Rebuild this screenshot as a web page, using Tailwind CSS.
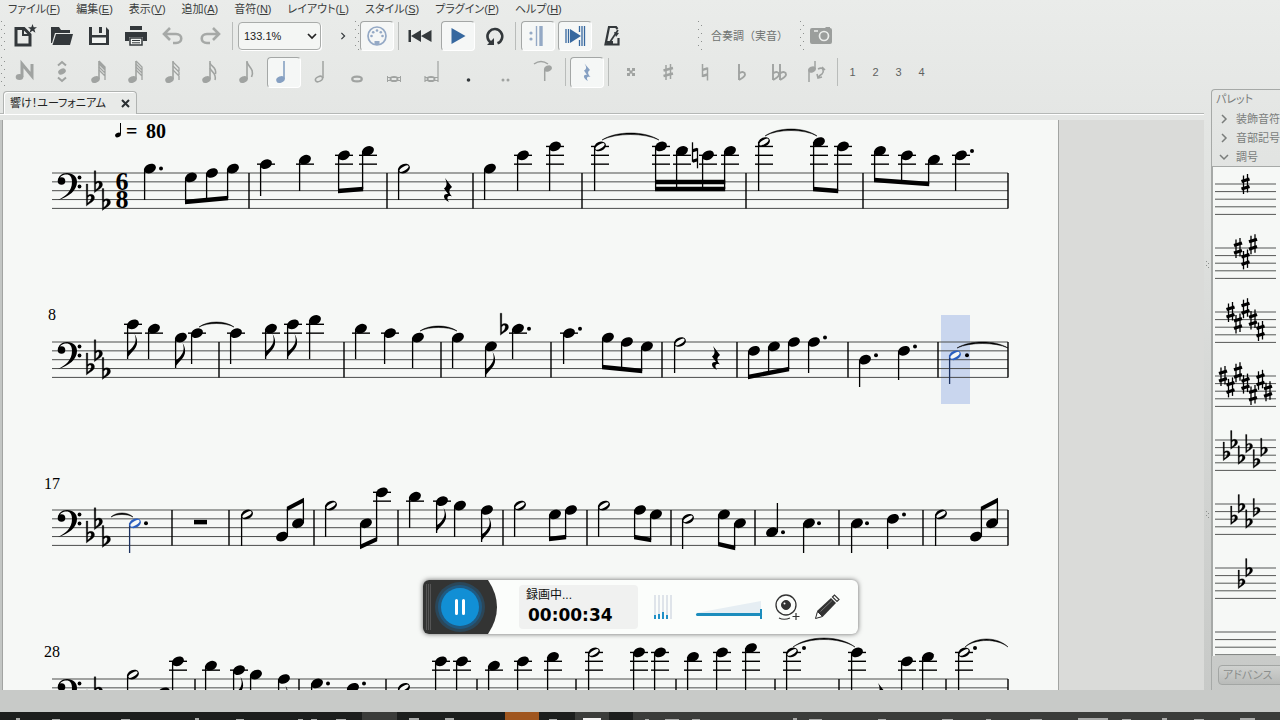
<!DOCTYPE html>
<html lang="ja">
<head>
    <meta charset="UTF-8">
    <meta name="viewport" content="width=device-width, initial-scale=1.0">
    <title>響け！ユーフォニアム</title>
    <script src="https://cdn.jsdelivr.net/npm/@tailwindcss/browser@4"></script>
</head>
<body class="flex h-screen flex-col overflow-hidden bg-linear-to-b from-[#eaecea] to-[#c6c8c6] font-['Liberation_Sans','Noto_Sans_CJK_JP',sans-serif] text-[11px] leading-4 text-[#3a3d3d] [font-feature-settings:'palt']">

    <!-- Shared symbols -->
    <svg class="absolute h-0 w-0" aria-hidden="true">
        <defs>
            <pattern id="dots" width="6" height="8" patternUnits="userSpaceOnUse">
                <rect x="0" y="0" width="1" height="1" fill="#8d908e"/>
                <rect x="3" y="4" width="1" height="1" fill="#8d908e"/>
            </pattern>
            <symbol id="grip" viewBox="0 0 5 30"><rect width="5" height="30" fill="url(#dots)"/></symbol>
            <symbol id="stem-note" viewBox="0 0 26 26">
                <ellipse cx="9.500" cy="20.500" rx="4.400" ry="3.200" transform="rotate(-22 9.500 20.500)" fill="currentColor"/>
                <path d="M13 20V2" stroke="currentColor" stroke-width="1.600"/>
            </symbol>
            <symbol id="flat" viewBox="0 0 26 26">
                <path d="M10 5v16M10 14.500c3-2.500 6-1.500 6 1c0 2.500-3 3.500-6 5.500" fill="none" stroke="currentColor" stroke-width="1.900"/>
            </symbol>
            <symbol id="chev-right" viewBox="0 0 10 10"><path d="M3 1l4 4l-4 4" fill="none" stroke="currentColor" stroke-width="1.500"/></symbol>
        </defs>
    </svg>

    <!-- Menu bar -->
    <nav class="flex h-[17px] shrink-0 items-center gap-4 pl-2 whitespace-nowrap">
        <button>ファイル(<u>F</u>)</button>
        <button>編集(<u>E</u>)</button>
        <button>表示(<u>V</u>)</button>
        <button>追加(<u>A</u>)</button>
        <button>音符(<u>N</u>)</button>
        <button>レイアウト(<u>L</u>)</button>
        <button>スタイル(<u>S</u>)</button>
        <button>プラグイン(<u>P</u>)</button>
        <button>ヘルプ(<u>H</u>)</button>
    </nav>

    <!-- File / playback toolbar -->
    <div class="flex h-[38px] shrink-0 items-center pl-px text-[#33383b]">
        <svg class="h-[30px] w-[5px] shrink-0"><use href="#grip"/></svg>
        <button class="flex w-[37px] justify-center" aria-label="新規作成">
            <svg class="size-[26px]" viewBox="0 0 26 26"><path d="M4 5.500h8l6 6V22H4z" fill="none" stroke="currentColor" stroke-width="3"/><path d="M11 5v7h7" fill="none" stroke="currentColor" stroke-width="2"/><path d="M20.500 1l1.200 3.300h3.300l-2.600 2l1 3.400l-2.900-2l-2.900 2l1-3.400l-2.600-2h3.300z" fill="currentColor"/></svg>
        </button>
        <button class="flex w-[37px] justify-center" aria-label="開く">
            <svg class="size-[26px]" viewBox="0 0 26 26"><path d="M2 4h8l2 3h9v3H6L3 20H2z" fill="currentColor"/><path d="M7 11h17l-3 11H3.500z" fill="currentColor"/></svg>
        </button>
        <button class="flex w-[37px] justify-center" aria-label="保存">
            <svg class="size-[26px]" viewBox="0 0 26 26"><path d="M3 4h3v8h14V4l3 3v15H3z" fill="currentColor"/><path d="M7 4h9v6H7z" fill="#e6e8e6"/><path d="M13 4h3v6h-3z" fill="currentColor"/><path d="M6 14.500h14V20H6z" fill="#f2f4f2"/></svg>
        </button>
        <button class="flex w-[37px] justify-center" aria-label="印刷">
            <svg class="size-[26px]" viewBox="0 0 26 26"><path d="M7 3h12v4H7zM2 9h22v9h-4v-4H6v4H2z" fill="currentColor"/><path d="M7 15h12v7H7z" fill="#f2f4f2" stroke="currentColor" stroke-width="1.500"/><path d="M9 17.500h8M9 19.800h8" stroke="currentColor"/></svg>
        </button>
        <button class="flex w-[37px] justify-center text-[#a6a9a7]" aria-label="元に戻す">
            <svg class="size-[26px]" viewBox="0 0 26 26"><path d="M10 5l-6 6l6 6M5 11h11c7 0 7 9 0 9h-3" fill="none" stroke="currentColor" stroke-width="2.600"/></svg>
        </button>
        <button class="flex w-[37px] justify-center text-[#a6a9a7]" aria-label="やり直し">
            <svg class="size-[26px]" viewBox="0 0 26 26"><path d="M16 5l6 6l-6 6M21 11H10c-7 0-7 9 0 9h3" fill="none" stroke="currentColor" stroke-width="2.600"/></svg>
        </button>
        <span class="mr-[5px] ml-[4px] h-7 w-px bg-[#b9bcba]"></span>
        <label class="relative flex h-7 w-[83px] items-center">
            <select class="h-full w-full appearance-none rounded-sm border border-[#a9acaa] bg-[#f4f6f4] pl-[5px] text-[11px] text-[#222] shadow-[1px_1px_0_#fff]" aria-label="ズーム">
                <option>133.1%</option>
                <option>100%</option>
                <option>75%</option>
            </select>
            <svg class="pointer-events-none absolute right-1 size-[10px]" viewBox="0 0 10 10"><path d="M1 3l4 4l4-4" fill="none" stroke="#222" stroke-width="1.700"/></svg>
        </label>
        <button class="flex w-[34px] justify-end pr-[8px]" aria-label="その他"><svg class="size-[8px]"><use href="#chev-right"/></svg></button>
        <svg class="h-[30px] w-[5px] shrink-0"><use href="#grip"/></svg>
        <button class="flex h-[30px] w-[34px] items-center justify-center rounded-sm border border-[#a4a7a6] border-r-white border-b-white bg-[#f5f7f6] text-[#94a9c5]" aria-label="MIDI入力">
            <svg class="size-[22px]" viewBox="0 0 22 22"><circle cx="11" cy="11" r="9" fill="none" stroke="currentColor" stroke-width="1.700"/><path d="M8.500 16h5v4h-5z" fill="currentColor"/><g fill="currentColor"><circle cx="5.500" cy="11" r="1.300"/><circle cx="7.200" cy="7.200" r="1.300"/><circle cx="11" cy="5.500" r="1.300"/><circle cx="14.800" cy="7.200" r="1.300"/><circle cx="16.500" cy="11" r="1.300"/></g></svg>
        </button>
        <span class="ml-[4px] h-7 w-px bg-[#b9bcba]"></span>
        <button class="flex w-[42px] justify-center" aria-label="先頭へ">
            <svg class="size-6" viewBox="0 0 24 24"><path d="M.500 6h2.500v12H.500zM13 6v12L3 12zM23.500 6v12l-10.500-6z" fill="currentColor"/></svg>
        </button>
        <button class="flex h-[30px] w-[34px] items-center justify-center rounded-sm border border-[#a4a7a6] border-r-white border-b-white bg-[#f5f7f6] text-[#36689f]" aria-label="再生">
            <svg class="size-[18px]" viewBox="0 0 18 18"><path d="M2.500 1l14 8l-14 8z" fill="currentColor"/></svg>
        </button>
        <button class="flex w-[40px] justify-center" aria-label="ループ">
            <svg class="size-5" viewBox="0 0 20 20"><path d="M6.500 17a7.400 7.400 0 1 1 6 .3" fill="none" stroke="currentColor" stroke-width="2.600"/><path d="M2 19h7v-7z" fill="currentColor"/></svg>
        </button>
        <span class="mr-[5px] h-7 w-px bg-[#b9bcba]"></span>
        <button class="flex h-[30px] w-[34px] items-center justify-center rounded-sm border border-[#a4a7a6] border-r-white border-b-white bg-[#f5f7f6] text-[#94a9c5]" aria-label="リピート">
            <svg class="size-5" viewBox="0 0 20 20"><circle cx="3" cy="7" r="1.600" fill="currentColor"/><circle cx="3" cy="13" r="1.600" fill="currentColor"/><path d="M8.500 0v20" stroke="currentColor" stroke-width="1.400"/><path d="M13 0v20" stroke="currentColor" stroke-width="3.400"/></svg>
        </button>
        <button class="ml-[3px] flex h-[30px] w-[34px] items-center justify-center rounded-sm border border-[#a4a7a6] border-r-white border-b-white bg-[#f5f7f6] text-[#36689f]" aria-label="プレイパン">
            <svg class="size-[22px]" viewBox="0 0 22 22"><path d="M2 4v14M4.500 4v14M15.500 1v6M18 1v20M15.500 15v6M20.500 1v20" stroke="currentColor" stroke-width="1.300"/><path d="M6 4l11 7l-11 7z" fill="currentColor"/></svg>
        </button>
        <button class="flex w-[40px] justify-center" aria-label="メトロノーム">
            <svg class="size-6" viewBox="0 0 24 24"><path d="M17.500 5L16 3H9L5.500 20.500h13V14" fill="none" stroke="currentColor" stroke-width="2.200"/><path d="M10 18L18 6" stroke="currentColor" stroke-width="1.700"/><path d="M14 8l5 1l-3 4z" fill="currentColor"/><path d="M7 17h6v3H7z" fill="currentColor"/></svg>
        </button>
        <svg class="ml-[66px] h-[30px] w-[5px] shrink-0"><use href="#grip"/></svg>
        <button class="w-[97px] pl-[8px] text-left whitespace-nowrap text-[#6f7270] [font-feature-settings:normal]">合奏調（実音）</button>
        <svg class="h-[30px] w-[5px] shrink-0"><use href="#grip"/></svg>
        <button class="flex w-[32px] justify-center text-[#9b9e9c]" aria-label="画像キャプチャ">
            <svg class="size-6" viewBox="0 0 24 24"><path d="M1 6q0-2 2-2h13l1-1h4v1q2 0 2 2v12q0 2-2 2H3q-2 0-2-2z" fill="currentColor"/><circle cx="15" cy="12" r="4.500" fill="none" stroke="#eceeec" stroke-width="1.700"/><path d="M5 7h4" stroke="#eceeec" stroke-width="1.500"/></svg>
        </button>
    </div>

    <!-- Note input toolbar -->
    <div class="flex h-[34px] shrink-0 items-center pl-px text-[#a0a3a1]">
        <svg class="h-[30px] w-[5px] shrink-0"><use href="#grip"/></svg>
        <button class="flex w-[37px] justify-center" aria-label="音符入力"><svg class="size-[26px]" viewBox="0 0 26 26"><ellipse cx="7.500" cy="18" rx="3.800" ry="3" fill="currentColor"/><path d="M10 18V5l10 12V5" fill="none" stroke="currentColor" stroke-width="3"/></svg></button>
        <button class="flex w-[37px] justify-center" aria-label="再ピッチ"><svg class="size-[26px]" viewBox="0 0 26 26"><ellipse cx="13" cy="12.500" rx="4" ry="2.800" transform="rotate(-25 13 12.500)" fill="currentColor"/><path d="M9 6.500l4-3.500l4 3.500M9 18.500l4 3.500l4-3.500" fill="none" stroke="currentColor" stroke-width="2"/></svg></button>
        <button class="flex w-[37px] justify-center" aria-label="64分音符"><svg class="size-[26px]" viewBox="0 0 26 26"><use href="#stem-note"/><path d="M13 2l6 6v3M13 5l6 6v3M13 8l6 6v3M13 11l6 6v4M13 3.500l6 6" fill="none" stroke="currentColor" stroke-width="1.300"/></svg></button>
        <button class="flex w-[37px] justify-center" aria-label="32分音符"><svg class="size-[26px]" viewBox="0 0 26 26"><use href="#stem-note"/><path d="M13 2l6 6v3M13 5l6 6v3M13 8l6 6v3M13 11l6 6v4" fill="none" stroke="currentColor" stroke-width="1.300"/></svg></button>
        <button class="flex w-[37px] justify-center" aria-label="16分音符(3連桁)"><svg class="size-[26px]" viewBox="0 0 26 26"><use href="#stem-note"/><path d="M13 3l6 6v3M13 7l6 6v3M13 11l6 6v4" fill="none" stroke="currentColor" stroke-width="1.300"/></svg></button>
        <button class="flex w-[37px] justify-center" aria-label="16分音符"><svg class="size-[26px]" viewBox="0 0 26 26"><use href="#stem-note"/><path d="M13 4c1 4 7 4 5.500 11M13 9c1 4 7 5 5 12" fill="none" stroke="currentColor" stroke-width="1.500"/></svg></button>
        <button class="flex w-[37px] justify-center" aria-label="8分音符"><svg class="size-[26px]" viewBox="0 0 26 26"><use href="#stem-note"/><path d="M13 3c1 5 8 7 4.500 15" fill="none" stroke="currentColor" stroke-width="1.600"/></svg></button>
        <button class="ml-[2px] flex h-[31px] w-[34px] items-center justify-center rounded-sm border border-[#a4a7a6] border-r-white border-b-white bg-[#f5f7f6] text-[#86a0c2]" aria-label="4分音符" aria-pressed="true"><svg class="size-[26px]" viewBox="0 0 26 26"><use href="#stem-note"/></svg></button>
        <button class="flex w-[37px] justify-center" aria-label="2分音符"><svg class="size-[26px]" viewBox="0 0 26 26"><ellipse cx="12" cy="20" rx="3.800" ry="2.400" transform="rotate(-25 12 20)" fill="none" stroke="currentColor" stroke-width="1.500"/><path d="M16 19V2" stroke="currentColor" stroke-width="1.500"/></svg></button>
        <button class="flex w-[37px] justify-center" aria-label="全音符"><svg class="size-[26px]" viewBox="0 0 26 26"><ellipse cx="13" cy="20" rx="4.800" ry="2.400" fill="none" stroke="currentColor" stroke-width="2.200"/></svg></button>
        <button class="flex w-[37px] justify-center" aria-label="倍全音符"><svg class="size-[26px]" viewBox="0 0 26 26"><ellipse cx="13" cy="20" rx="3.600" ry="2.200" fill="none" stroke="currentColor" stroke-width="1.800"/><path d="M6.500 17v6M19.500 17v6M6.500 18.500h13M6.500 21.500h13" stroke="currentColor"/></svg></button>
        <button class="flex w-[37px] justify-center" aria-label="ロンガ"><svg class="size-[26px]" viewBox="0 0 26 26"><ellipse cx="13" cy="20" rx="3.600" ry="2.200" fill="none" stroke="currentColor" stroke-width="1.800"/><path d="M7 17v6M7 18.500h13M7 21.500h13M20 2v21" stroke="currentColor" stroke-width="1.200"/></svg></button>
        <button class="flex w-[37px] justify-center" aria-label="付点"><svg class="size-[26px]" viewBox="0 0 26 26"><circle cx="13.500" cy="21" r="1.800" fill="#33383b"/></svg></button>
        <button class="flex w-[37px] justify-center" aria-label="複付点"><svg class="size-[26px]" viewBox="0 0 26 26"><circle cx="11" cy="21" r="1.500" fill="currentColor"/><circle cx="16" cy="21" r="1.500" fill="currentColor"/></svg></button>
        <button class="flex w-[37px] justify-center" aria-label="タイ"><svg class="size-[26px]" viewBox="0 0 26 26"><path d="M5 5q7-5 14 0" fill="none" stroke="currentColor" stroke-width="1.500"/><ellipse cx="19" cy="9.500" rx="4" ry="3" transform="rotate(-25 19 9.500)" fill="currentColor"/><path d="M15.700 10v12" stroke="currentColor" stroke-width="1.500"/></svg></button>
        <span class="mr-[4px] ml-[5px] h-7 w-px bg-[#b9bcba]"></span>
        <button class="flex h-[31px] w-[34px] items-center justify-center rounded-sm border border-[#a4a7a6] border-r-white border-b-white bg-[#f5f7f6] text-[#86a0c2]" aria-label="休符"><svg class="size-[18px]" viewBox="-9 -9 18 18"><path d="M-2.500-8.500L3-2C0 0 1 2 3.500 5C0 4 -1 6 1 9C-5 6 -3.500 2 0 3L-3-1.500C0-3 -.500-5 -2.500-8.500Z" fill="currentColor"/></svg></button>
        <span class="mr-[3px] ml-[4px] h-7 w-px bg-[#b9bcba]"></span>
        <button class="flex w-[37px] justify-center" aria-label="ダブルシャープ"><svg class="size-[26px]" viewBox="0 0 26 26"><path d="M10 10l6 6M16 10l-6 6" stroke="currentColor" stroke-width="1.700"/><path d="M9 9h3v3H9zM14 9h3v3h-3zM9 14h3v3H9zM14 14h3v3h-3z" fill="currentColor"/></svg></button>
        <button class="flex w-[37px] justify-center" aria-label="シャープ"><svg class="size-[26px]" viewBox="0 0 26 26"><path d="M11 6v15M15.500 5v15" stroke="currentColor" stroke-width="1.500"/><path d="M8.500 11.500l9.500-2.500M8.500 17l9.500-2.500" stroke="currentColor" stroke-width="2.400"/></svg></button>
        <button class="flex w-[37px] justify-center" aria-label="ナチュラル"><svg class="size-[26px]" viewBox="0 0 26 26"><path d="M10.500 5v13M15.500 8.500v13" stroke="currentColor" stroke-width="1.500"/><path d="M10.500 10.800l5-1.500M10.500 17l5-1.500" stroke="currentColor" stroke-width="2.400"/></svg></button>
        <button class="flex w-[37px] justify-center" aria-label="フラット"><svg class="size-[26px]" viewBox="0 0 26 26"><use href="#flat"/></svg></button>
        <button class="flex w-[37px] justify-center" aria-label="ダブルフラット"><svg class="size-[26px]" viewBox="0 0 26 26"><use href="#flat" x="-3"/><use href="#flat" x="4"/></svg></button>
        <button class="flex w-[37px] justify-center" aria-label="符尾反転"><svg class="size-[26px]" viewBox="0 0 26 26"><ellipse cx="9" cy="10.500" rx="4" ry="3" transform="rotate(-25 9 10.500)" fill="currentColor"/><path d="M12 10V2M6 11v12" stroke="currentColor" stroke-width="1.500"/><path d="M15 10c6-3 6 3 4 5c-2 1-3 2-4 4M19 8l3 3M14 15l1 4l4-1" fill="none" stroke="currentColor" stroke-width="1.600"/></svg></button>
        <span class="mr-[3px] ml-[3px] h-7 w-px bg-[#b9bcba]"></span>
        <div class="flex text-[#5f6260]">
            <button class="w-[23px]">1</button>
            <button class="w-[23px]">2</button>
            <button class="w-[23px]">3</button>
            <button class="w-[23px]">4</button>
        </div>
    </div>

    <!-- Main area -->
    <main class="flex min-h-0 flex-1">
        <section class="flex min-w-0 flex-1 flex-col">
            <div class="flex h-[25px] shrink-0 items-end">
                <span class="h-full w-[3px] border-b border-[#b5b8b6]"></span>
                <div class="flex h-[23px] w-[134px] items-center justify-between rounded-t-sm border border-b-0 border-[#b0b3b1] bg-[#e8eae8] pr-[6px] pl-[6px] text-[#222] shadow-[inset_1px_1px_0_#fff]">
                    <span class="whitespace-nowrap">響け！ユーフォニアム</span>
                    <button aria-label="閉じる"><svg class="size-[9px]" viewBox="0 0 9 9"><path d="M1 1l7 7M8 1l-7 7" stroke="#2b3033" stroke-width="2"/></svg></button>
                </div>
                <span class="h-full flex-1 border-b border-[#b5b8b6]"></span>
            </div>
            <div class="h-[6px] shrink-0 border-t border-white"></div>
            <div class="flex min-h-0 flex-1 overflow-hidden border-l-2 border-[#c3c6c4] bg-[#dadbd9]">
                <div class="w-[1057px] shrink-0 border-x border-[#a2a4a2] bg-[#f6f8f6]">
                    <svg id="score" class="block h-[570px] w-[1055px]" viewBox="3 120 1055 570" role="img" aria-label="楽譜"></svg>
                </div>
            </div>
        </section>

        <div class="flex w-[7px] shrink-0 flex-col items-center pt-[172px]">
            <svg class="h-[260px] w-[3px]" viewBox="0 0 3 260" fill="#8d908e"><path d="M0 0h1v1H0zM2 2h1v1H2zM0 4h1v1H0zM2 6h1v1H2zM0 250h1v1H0zM2 252h1v1H2zM0 254h1v1H0zM2 256h1v1H2z"/></svg>
        </div>

        <!-- Palette -->
        <aside class="flex w-[69px] shrink-0 flex-col overflow-hidden rounded-tl border-t border-l border-[#a6a9a7] text-[#7a7d7b]">
            <h2 class="h-[19px] shrink-0 pl-[4px] leading-[19px]">パレット</h2>
            <button class="flex h-[19px] shrink-0 items-center gap-[7px] pl-[7px] whitespace-nowrap"><svg class="size-[10px] shrink-0"><use href="#chev-right"/></svg>装飾音符</button>
            <button class="flex h-[19px] shrink-0 items-center gap-[7px] pl-[7px] whitespace-nowrap"><svg class="size-[10px] shrink-0"><use href="#chev-right"/></svg>音部記号</button>
            <button class="flex h-[19px] shrink-0 items-center gap-[7px] pl-[7px] whitespace-nowrap"><svg class="size-[10px] shrink-0" viewBox="0 0 10 10"><path d="M1 3l4 4l4-4" fill="none" stroke="currentColor" stroke-width="1.500"/></svg>調号</button>
            <div class="min-h-0 flex-1 overflow-hidden border-t border-l border-[#a6a9a7] bg-[#f6f8f6]">
                <svg id="palette" class="block h-[512px] w-[67px]" viewBox="1213 167 67 512" role="img" aria-label="調号パレット"></svg>
            </div>
            <div class="h-[34px] shrink-0 pt-[9px] pl-[6px]">
                <button class="h-5 w-20 rounded-sm border border-[#a3a6a4] bg-linear-to-b from-[#cfd1cf] to-[#b9bbb9] pl-[4px] text-left whitespace-nowrap text-[#8b8e8c]">アドバンス</button>
            </div>
        </aside>
    </main>

    <div class="h-[22px] shrink-0 bg-[#c8cac8]"></div>

    <!-- Taskbar -->
    <footer class="flex h-2 shrink-0 bg-[#3b3c3a]">
        <svg class="h-2 w-full" viewBox="0 0 1280 8" preserveAspectRatio="xMinYMin slice">
            <path d="M0 0h362v8H0zM397 0h108v8H397zM539 0h36v8h-36zM609 0h24v8h-24z" fill="#1c1e1d"/>
            <path d="M505 0h34v8h-34z" fill="#a0561f"/>
            <path d="M583 6h18v2h-18z" fill="#f2f2f2"/>
            <g fill="#a9aaa9">
                <path d="M16 6h4v2h-4zM52 7h8v1h-8zM121 7h9v1h-9zM195 6h4v2h-4zM236 7h8v1h-8zM298 7h5v1h-5zM311 7h6v1h-6zM336 7h10v1h-10zM409 6h10v2h-10zM445 6h9v2h-9zM549 7h8v1h-8zM645 7h4v1h-4zM665 7h14v1h-14zM692 7h8v1h-8zM793 6h4v2h-4zM809 7h13v1h-13zM878 7h8v1h-8zM942 7h11v1h-11zM986 7h5v1h-5zM1030 7h12v1h-12zM1078 6h30v2h-30zM1122 7h9v1h-9zM1162 6h5v2h-5zM1194 7h10v1h-10zM1240 6h15v2h-15z"/>
            </g>
        </svg>
    </footer>

    <!-- Recorder window floating over the score -->
    <div class="absolute top-[580px] left-[423px] flex h-[54px] w-[435px] items-center overflow-hidden rounded-md bg-[#fbfdfb] text-[#111] shadow-[0_0_5px_#666]">
        <button class="h-full w-[74px] shrink-0" aria-label="一時停止">
            <svg class="h-[54px] w-[74px]" viewBox="0 0 74 54">
                <path d="M0 0h65q18 27 0 54H0z" fill="#333433"/>
                <path d="M3.500 4v46M5.500 4v46M7.500 4v46" stroke="#555" stroke-width="1"/>
                <circle cx="37" cy="27" r="25" fill="#2b4759"/>
                <circle cx="37" cy="27" r="22" fill="#1f5a82"/>
                <circle cx="37" cy="27" r="19" fill="#118fd5"/>
                <path d="M33.500 20.500v13M40.500 20.500v13" stroke="#fff" stroke-width="3" stroke-linecap="round"/>
            </svg>
        </button>
        <div class="ml-[22px] h-[44px] w-[119px] shrink-0 rounded-sm bg-[#f0f1f0] pl-[7px]">
            <div class="pt-px text-[12px] leading-[18px] [font-feature-settings:normal]">録画中...</div>
            <div class="pl-[2px] font-['DejaVu_Sans',sans-serif] text-[17px] leading-[22px] font-bold text-black">00:00:34</div>
        </div>
        <svg class="ml-[16px] h-[26px] w-[19px] shrink-0" viewBox="0 0 19 26">
            <path d="M1 1v24M5 1v24M9 1v24M13 1v24M17 1v24" stroke="#dfe4ea" stroke-width="2"/>
            <path d="M1 21v4M5 20v5M9 18v7M13 21v4" stroke="#2090c6" stroke-width="2"/>
        </svg>
        <div class="relative ml-[23px] h-[26px] w-[66px] shrink-0">
            <svg class="absolute inset-0 h-[26px] w-[66px]" viewBox="0 0 66 26"><path d="M0 19L65 7v12z" fill="#e6eef3"/></svg>
            <input type="range" min="0" max="100" value="100" aria-label="音量" class="absolute top-[15px] left-0 h-[10px] w-[66px] appearance-none bg-transparent [&::-webkit-slider-runnable-track]:h-[3px] [&::-webkit-slider-runnable-track]:rounded-sm [&::-webkit-slider-runnable-track]:bg-[#1c8dbd] [&::-webkit-slider-thumb]:-mt-[4px] [&::-webkit-slider-thumb]:h-[10px] [&::-webkit-slider-thumb]:w-[2px] [&::-webkit-slider-thumb]:appearance-none [&::-webkit-slider-thumb]:bg-[#1c8dbd]">
        </div>
        <button class="ml-[12px] shrink-0" aria-label="ウェブカメラ">
            <svg class="h-[28px] w-[26px]" viewBox="0 0 26 28" fill="none" stroke="#333"><circle cx="12" cy="12" r="10" stroke-width="1.300"/><circle cx="12" cy="12" r="4.500" fill="#333"/><circle cx="10.500" cy="10.500" r="1" fill="#fff" stroke="none"/><path d="M5 25q5 2.500 11 0M18.500 23.500h7M22 20v7" stroke-width="1.200"/></svg>
        </button>
        <button class="ml-[14px] shrink-0" aria-label="描画">
            <svg class="size-[26px]" viewBox="0 0 26 26"><path d="M1.500 24.500l2-8L17 4l5 5L9 22.500z" fill="#333"/><path d="M1.500 24.500l2-7l5 5z" fill="#fbfdfb" stroke="#333"/><path d="M18.500 3l2-2l4.500 4.500l-2 2z" fill="#fbfdfb" stroke="#333" stroke-width="1.200"/><path d="M6.500 17.500L18 6.500" stroke="#888" stroke-width=".8"/></svg>
        </button>
    </div>

    <script>
        const SPACE = 8.85;          // distance between two staff lines
        const STEP = SPACE / 2;      // one scale step
        const INK = '#000';
        const SELECTED = '#2a5fc0';

        // q = quarter, h = half, e = eighth: [type, x, step above top line, stem end, options]
        // b = beamed group: ['b', [[x, step], ...], beam y left, beam y right, options]
        // bar, rest, tie: positions only
        const staves = [
            { top: 173, number: null, time: true, items: [
                ['q', 150, 1, 200, { dot: 161 }], ['b', [[191, -1], [212, 0], [233, 1]], 202, 198], ['bar', 249],
                ['q', 266, 2, 196], ['q', 305, 3, 191], ['b', [[344, 4], [368, 5]], 191, 189], ['bar', 387],
                ['h', 404, 1, 200], ['rest', 448, 190], ['bar', 473],
                ['q', 490, 1, 200], ['q', 523, 4, 191], ['q', 555, 6, 191], ['bar', 582],
                ['h', 600, 6, 191], ['tie', 602, 659, 140, 133],
                ['b', [[661, 6], [682, 5], [708, 4], [730, 5]], 189, 189, { double: true }], ['natural', 695, 4], ['bar', 746],
                ['h', 764, 7, 191], ['tie', 765, 817, 136, 129], ['b', [[819, 7], [843, 6]], 189, 191], ['bar', 863],
                ['b', [[880, 5], [907, 4], [934, 3]], 180, 184], ['q', 961, 4, 191, { dot: 972 }], ['bar', 1008]
            ]},
            { top: 342, number: ['8', 48, 320], items: [
                ['e', 133, 4, 359], ['q', 154, 3, 359], ['e', 181, 1, 368], ['q', 197, 2, 364], ['tie', 199, 234, 327, 322], ['bar', 219],
                ['q', 236, 2, 364], ['e', 271, 3, 359], ['e', 293, 4, 359], ['q', 315, 5, 359], ['bar', 344],
                ['q', 361, 3, 359], ['q', 390, 2, 364], ['q', 418, 1, 368], ['tie', 420, 457, 331, 326], ['bar', 441],
                ['q', 458, 1, 368], ['e', 491, -1, 377], ['flat', 501, 3], ['q', 518, 3, 359, { dot: 529 }], ['bar', 551],
                ['q', 569, 2, 364, { dot: 580 }], ['b', [[608, 1], [627, 0], [647, -1]], 367, 371], ['bar', 662],
                ['h', 680, 0, 373], ['rest', 716, 358], ['bar', 737],
                ['b', [[754, -2], [774, -1], [794, 0]], 377, 369], ['q', 814, 0, 373, { dot: 825 }], ['bar', 848],
                ['q', 865, -4, 387, { dot: 876 }], ['q', 904, -2, 380, { dot: 915 }], ['bar', 938],
                ['h', 955, -3, 384, { dot: 967, selected: true }], ['tie', 957, 1008, 348, 342], ['bar', 1008]
            ]},
            { top: 510, number: ['17', 44, 489], items: [
                ['tie', 111, 133, 517, 513], ['h', 135, -3, 553, { dot: 146, selected: true }], ['bar', 172],
                ['whole-rest', 194], ['bar', 229],
                ['h', 247, -1, 546], ['b', [[282, -6], [298, -3]], 509, 500, { up: true }], ['bar', 314],
                ['h', 331, 1, 537], ['b', [[366, -3], [382, 4]], 547, 539], ['bar', 398],
                ['q', 415, 3, 528], ['e', 442, 2, 533], ['q', 460, 1, 537], ['e', 487, 0, 542], ['bar', 503],
                ['h', 520, 1, 537], ['b', [[555, -1], [571, 0]], 539, 537], ['bar', 587],
                ['h', 604, 1, 537], ['b', [[640, 0], [656, -1]], 537, 540], ['bar', 671],
                ['h', 688, -2, 549], ['b', [[724, -1], [740, -3]], 544, 548], ['bar', 755],
                ['q', 772, -5, 503, { dot: 783, up: true }], ['q', 809, -3, 553, { dot: 819 }], ['bar', 839],
                ['q', 857, -3, 553, { dot: 867 }], ['q', 893, -2, 549, { dot: 904 }], ['bar', 923],
                ['h', 941, -1, 546], ['b', [[976, -6], [992, -3]], 509, 500, { up: true }], ['bar', 1008]
            ]},
            { top: 679, number: ['28', 44, 657], items: [
                ['h', 133, 1, 706], ['b', [[164, -3], [178, 4]], 716, 708], ['bar', 195],
                ['q', 211, 3, 697], ['e', 239, 2, 702], ['q', 256, 1, 706], ['e', 284, 0, 711], ['bar', 299],
                ['q', 317, -1, 715, { dot: 328 }], ['q', 353, -2, 718, { dot: 364 }], ['bar', 386],
                ['h', 404, -2, 718], ['q', 441, 4, 697], ['q', 462, 4, 697], ['bar', 477],
                ['q', 494, 3, 697], ['q', 523, 4, 697], ['q', 553, 5, 697], ['bar', 576],
                ['h', 594, 6, 697], ['q', 639, 6, 697], ['q', 660, 6, 697], ['bar', 676],
                ['q', 693, 5, 697], ['q', 722, 6, 697], ['q', 751, 7, 697], ['bar', 775],
                ['h', 792, 6, 697, { dot: 804 }], ['tie', 793, 855, 647, 638], ['bar', 839],
                ['q', 857, 6, 697], ['rest', 881, 695], ['q', 907, 4, 697], ['q', 928, 5, 697], ['bar', 946],
                ['h', 964, 6, 697, { dot: 975 }], ['tie', 965, 1008, 647, 639], ['bar', 1008]
            ]}
        ];

        const line = (x1, y1, x2, y2, w = 1.3, c = INK) =>
            `<path d="M${x1} ${y1}L${x2} ${y2}" stroke="${c}" stroke-width="${w}" fill="none"/>`;

        function flat(x, y, s = 1) {
            return `<g transform="translate(${x} ${y}) scale(${s})"><path d="M-.8-15.500H.8L.7 3.500C3 2 4.300 0 4.300-2C4.300-4.200 2-4 .7-2V-4C3-6.200 7.500-5.500 7.500-1.800C7.500 2 2.500 3.500-.6 6.500Z" stroke="#000" stroke-width=".3"/></g>`;
        }

        function sharp(x, y) {
            return `<g transform="translate(${x} ${y})">` +
                line(-2, -8.5, -2, 10, 1.3) + line(2, -10, 2, 8.5, 1.3) +
                line(-4, -2.4, 4, -5, 3.2) + line(-4, 5, 4, 2.4, 3.2) + '</g>';
        }

        function head(x, y, half, color) {
            const body = `<ellipse cx="${x}" cy="${y}" rx="6.2" ry="4.5" transform="rotate(-25 ${x} ${y})" fill="${color}"/>`;
            if (!half) return body;
            return body + `<ellipse cx="${x}" cy="${y}" rx="5.2" ry="2" transform="rotate(-32 ${x} ${y})" fill="#f6f8f6"/>`;
        }

        function ledgers(x, step, top) {
            let out = '';
            for (let k = 2; k <= step; k += 2) out += line(x - 9, top - k * STEP, x + 9, top - k * STEP, 1.4);
            return out;
        }

        function drawItem(item, top) {
            const [type, a, b, c, d] = item;
            const y = top - b * STEP;
            if (type === 'bar') return line(a, top, a, top + 4 * SPACE, 1.4);
            if (type === 'rest') {
                return `<path transform="translate(${a} ${b})" d="M-3-12L4-3C0 0 1 3 4 6.500C-.5 5-2 7.500 1 12C-6 8.500-5 3 0 4L-4-1.500C-.5-4-1-7.500-3-12Z"/>`;
            }
            if (type === 'whole-rest') return `<rect x="${a}" y="${top + SPACE + 1}" width="13" height="4.500"/>`;
            if (type === 'tie') {
                const peak = 4 / 3 * (c - d);
                const w = (b - a) / 4;
                return `<path d="M${a} ${c}C${a + w} ${c - peak} ${b - w} ${c - peak} ${b} ${c}C${b - w} ${c - peak + 2} ${a + w} ${c - peak + 2} ${a} ${c}Z" stroke="#000" stroke-width=".5"/>`;
            }
            if (type === 'flat') return flat(a, y);
            if (type === 'natural') {
                return line(a - 2.5, y - 13, a - 2.5, y + 6.5) + line(a + 2.5, y - 7, a + 2.5, y + 13) +
                    line(a - 2.5, y - 4.5, a + 2.5, y - 6, 3) + line(a - 2.5, y + 6, a + 2.5, y + 4.5, 3);
            }
            if (type === 'b') {
                const opts = d || {};
                const dx = opts.up ? 5.4 : -5.4;
                const x1 = a[0][0] + dx;
                const x2 = a[a.length - 1][0] + dx;
                let out = '';
                for (const [x, step] of a) {
                    const end = b + (c - b) * (x + dx - x1) / (x2 - x1);
                    out += ledgers(x, step, top) + head(x, top - step * STEP, false, INK) + line(x + dx, top - step * STEP, x + dx, end);
                }
                const beam = (o) => `<path d="M${x1 - .6} ${b - 2.2 - o}L${x2 + .6} ${c - 2.2 - o}v4.400L${x1 - .6} ${b + 2.2 - o}Z"/>`;
                return out + beam(0) + (opts.double ? beam(7) : '');
            }
            // single notes
            const opts = d || {};
            const sx = a + (opts.up ? 5.4 : -5.4);
            let out = ledgers(a, b, top) + line(sx, y, sx, c, 1.3, opts.selected ? '#1d3260' : INK);
            out += head(a, y, type === 'h', opts.selected ? SELECTED : INK);
            if (type === 'e') {
                out += `<path transform="translate(${sx} ${c})" d="M-.6 0C1-5 10-10 9.500-17C9.500-20 8.500-23 7-25C9-19 8-16 5-12C3-9.500 1-8-.6-8Z"/>`;
            }
            if (opts.dot) {
                const dy = b % 2 === 0 ? y - STEP : y;
                out += `<circle cx="${opts.dot}" cy="${dy}" r="2"/>`;
            }
            return out;
        }

        function drawStaff(staff) {
            const t = staff.top;
            let out = '';
            for (let i = 0; i < 5; i++) out += line(52, t + i * SPACE, 1008, t + i * SPACE, 1, '#4a4c4b');
            // bass clef and three flats
            out += `<g transform="translate(0 ${t - 173})"><path d="M58 200C66 196 72 191 72 182C72 177 70 174.500 66.500 174.500C63 174.500 60 176 60 179L58 181C58 176 62 173 67 173C73 173 77 176.500 77 182C77 190 69 197 58 200Z"/><circle cx="61.500" cy="181" r="3.800"/><circle cx="79.500" cy="177.500" r="1.900"/><circle cx="79.500" cy="186.500" r="1.900"/></g>`;
            out += flat(87, t + 6 * STEP) + flat(95, t + 3 * STEP) + flat(103, t + 7 * STEP);
            if (staff.time) {
                out += `<text x="122" y="190" font-size="26" font-weight="bold" text-anchor="middle">6</text><text x="122" y="208" font-size="26" font-weight="bold" text-anchor="middle">8</text>`;
            }
            if (staff.number) {
                const [label, x, y] = staff.number;
                out += `<text x="${x}" y="${y}" font-size="16">${label}</text>`;
            }
            return out + staff.items.map((item) => drawItem(item, t)).join('');
        }

        const tempo = '<ellipse cx="118" cy="135" rx="3" ry="2.200" transform="rotate(-25 118 135)"/>' + line(120.5, 134, 120.5, 123, 1) +
            '<text x="126" y="138" font-size="20" font-weight="bold">=</text><text x="146" y="138" font-size="20" font-weight="bold">80</text>';

        document.getElementById('score').innerHTML =
            '<rect x="941" y="315" width="29" height="89" fill="#c9d6ee"/>' +
            `<g font-family="Liberation Serif, serif">${tempo}${staves.map(drawStaff).join('')}</g>`;

        // Key signatures of the palette, as steps below the top line
        const sharps = [0, 3, -1, 2, 5, 1, 4];
        const flats = [4, 1, 5, 2, 6, 3];
        const keys = [1, 3, 5, 7, -6, -4, -2, 0];

        document.getElementById('palette').innerHTML = keys.map((key, row) => {
            const top = 184 + row * 64;
            const n = Math.abs(key);
            let out = '';
            for (let i = 0; i < 5; i++) out += line(1215, top + i * 7.6, 1276, top + i * 7.6, 1, '#555756');
            for (let i = 0; i < n; i++) {
                const x = 1245.5 + (i - (n - 1) / 2) * 7.5;
                out += key > 0 ? sharp(x, top + sharps[i] * 3.8) : flat(x - 3, top + flats[i] * 3.8, 0.85);
            }
            return out;
        }).join('');
    </script>
</body>
</html>
